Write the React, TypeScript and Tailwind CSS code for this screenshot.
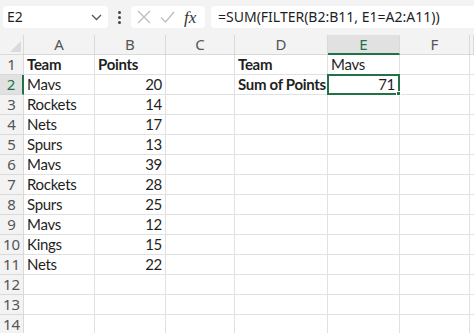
import React from 'react';

const cols = ['A', 'B', 'C', 'D', 'E', 'F', ''];

type Cell = { text?: string; bold?: boolean; right?: boolean };

const rows: Record<number, Record<string, Cell>> = {
  1: { A: { text: 'Team', bold: true }, B: { text: 'Points', bold: true }, D: { text: 'Team', bold: true }, E: { text: 'Mavs' } },
  2: { A: { text: 'Mavs' }, B: { text: '20', right: true }, D: { text: 'Sum of Points', bold: true }, E: { text: '71', right: true } },
  3: { A: { text: 'Rockets' }, B: { text: '14', right: true } },
  4: { A: { text: 'Nets' }, B: { text: '17', right: true } },
  5: { A: { text: 'Spurs' }, B: { text: '13', right: true } },
  6: { A: { text: 'Mavs' }, B: { text: '39', right: true } },
  7: { A: { text: 'Rockets' }, B: { text: '28', right: true } },
  8: { A: { text: 'Spurs' }, B: { text: '25', right: true } },
  9: { A: { text: 'Mavs' }, B: { text: '12', right: true } },
  10: { A: { text: 'Kings' }, B: { text: '15', right: true } },
  11: { A: { text: 'Nets' }, B: { text: '22', right: true } },
};

const gridCols = 'grid grid-cols-[24px_71px_71px_69px_93px_72px_70px_1fr]';

const App: React.FC = () => {
  return (
    <div className="w-[474px] h-[333px] overflow-hidden bg-white font-['Noto_Sans',sans-serif] text-[14px] text-[#1f1f1f]">
      {/* formula bar */}
      <div className="h-[35px] bg-[#f3f3f3] flex items-start pt-[6px] pl-[3px]">
        <div className="w-[105px] h-[22px] bg-white rounded-[4px] flex items-center justify-between pl-[4px] pr-[6px]">
          <span className="leading-none">E2</span>
          <svg width="11" height="7" viewBox="0 0 11 7" fill="none" stroke="#555" strokeWidth="1.3">
            <path d="M1 1l4.5 4.5L10 1" />
          </svg>
        </div>
        <div className="w-[23px] h-[22px] flex flex-col items-center justify-center gap-[2px]">
          <span className="w-[3px] h-[3px] rounded-full bg-[#444]" />
          <span className="w-[3px] h-[3px] rounded-full bg-[#444]" />
          <span className="w-[3px] h-[3px] rounded-full bg-[#444]" />
        </div>
        <div className="w-[74px] h-[22px] bg-white rounded-[4px] flex items-center pl-[6px] gap-[9px]">
          <svg width="14" height="14" viewBox="0 0 14 14" fill="none" stroke="#bdbdbd" strokeWidth="1.3">
            <path d="M1 1l12 12M13 1L1 13" />
          </svg>
          <svg width="15" height="12" viewBox="0 0 15 12" fill="none" stroke="#bdbdbd" strokeWidth="1.3">
            <path d="M1 6.5l4.5 4.5L14 1" />
          </svg>
          <span className="font-['Liberation_Serif',serif] italic text-[17px] leading-none text-[#333]">fx</span>
        </div>
        <div className="ml-[6px] flex-1 h-[22px] bg-white rounded-l-[4px] flex items-center pl-[7px]">
          <span className="leading-none whitespace-nowrap">=SUM(FILTER(B2:B11, E1=A2:A11))</span>
        </div>
      </div>

      {/* column headers */}
      <div className={`${gridCols} h-[20px] text-[15px]`}>
        <div className="bg-[#f3f3f3] border-r border-b border-[#d9d9d9] relative">
          <svg className="absolute right-[2px] bottom-[2px]" width="11" height="11" viewBox="0 0 11 11">
            <path d="M11 0V11H0Z" fill="#dadada" />
          </svg>
        </div>
        {cols.map((c) => (
          <div
            key={c || 'g'}
            className={
              c === 'E'
                ? 'bg-[#e1e1e1] border-r border-[#d9d9d9] border-b-2 border-b-[#217346] flex items-center justify-center text-[#217346] leading-none'
                : 'bg-[#f3f3f3] border-r border-b border-[#d9d9d9] flex items-center justify-center text-[#555] leading-none'
            }
          >
            {c}
          </div>
        ))}
      </div>

      {/* rows */}
      {Array.from({ length: 14 }, (_, i) => i + 1).map((r) => (
        <div key={r} className={`${gridCols} h-[20px]`}>
          <div
            className={
              r === 2
                ? 'bg-[#e1e1e1] border-b border-[#d9d9d9] border-r-2 border-r-[#217346] flex items-center justify-center text-[#217346] leading-none text-[15px]'
                : 'bg-[#f3f3f3] border-r border-b border-[#d9d9d9] flex items-center justify-center text-[#555] leading-none text-[15px]'
            }
          >
            {r}
          </div>
          {cols.map((c) => {
            const cell = rows[r]?.[c];
            const selected = r === 2 && c === 'E';
            return (
              <div
                key={c || 'g'}
                className={
                  selected
                    ? "relative border-2 border-[#217346] -ml-px -mt-px h-[21px] flex items-center justify-end px-[3px] leading-none font-['Lato',sans-serif] text-[15px] tracking-[-0.3px]"
                    : `border-r border-b border-[#e1e1e1] flex items-center px-[3px] leading-none whitespace-nowrap font-['Lato',sans-serif] text-[15px] tracking-[-0.3px] ${cell?.right ? 'justify-end' : ''}`
                }
              >
                <span className={cell?.bold ? 'font-bold' : ''}>{cell?.text}</span>
                {selected && <span className="absolute -right-[3px] -bottom-[3px] w-[5px] h-[5px] bg-[#217346] border border-white" />}
              </div>
            );
          })}
        </div>
      ))}
    </div>
  );
};

export default App;
